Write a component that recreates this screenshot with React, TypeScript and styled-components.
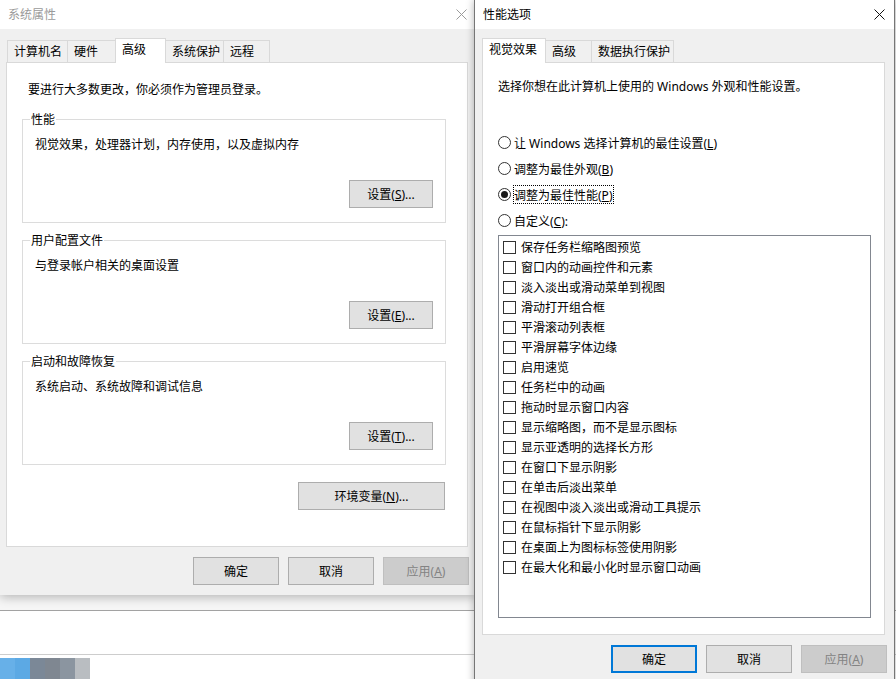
import styled, { createGlobalStyle } from 'styled-components'

type TabItem = { label: string; width: number; selected?: boolean }
type GroupItem = { title: string; text: string; label: string; key: string }

const leftTabs: TabItem[] = [
  { label: '计算机名', width: 61 },
  { label: '硬件', width: 49 },
  { label: '高级', width: 51, selected: true },
  { label: '系统保护', width: 59 },
  { label: '远程', width: 47 },
]

const rightTabs: TabItem[] = [
  { label: '视觉效果', width: 64, selected: true },
  { label: '高级', width: 47 },
  { label: '数据执行保护', width: 83 },
]

const groups: GroupItem[] = [
  { title: '性能', text: '视觉效果，处理器计划，内存使用，以及虚拟内存', label: '设置', key: 'S' },
  { title: '用户配置文件', text: '与登录帐户相关的桌面设置', label: '设置', key: 'E' },
  { title: '启动和故障恢复', text: '系统启动、系统故障和调试信息', label: '设置', key: 'T' },
]

const radios = [
  { before: '让 Windows 选择计算机的最佳设置(', key: 'L', after: ')' },
  { before: '调整为最佳外观(', key: 'B', after: ')' },
  { before: '调整为最佳性能(', key: 'P', after: ')', checked: true },
  { before: '自定义(', key: 'C', after: '):' },
]

const effects = [
  '保存任务栏缩略图预览',
  '窗口内的动画控件和元素',
  '淡入淡出或滑动菜单到视图',
  '滑动打开组合框',
  '平滑滚动列表框',
  '平滑屏幕字体边缘',
  '启用速览',
  '任务栏中的动画',
  '拖动时显示窗口内容',
  '显示缩略图，而不是显示图标',
  '显示亚透明的选择长方形',
  '在窗口下显示阴影',
  '在单击后淡出菜单',
  '在视图中淡入淡出或滑动工具提示',
  '在鼠标指针下显示阴影',
  '在桌面上为图标标签使用阴影',
  '在最大化和最小化时显示窗口动画',
]

const tiles = ['#67b0e8', '#5ca9e4', '#7b8897', '#7f8791', '#8b95a0', '#b9bdc1']

function CloseGlyph({ color }: { color: string }) {
  return (
    <svg width="11" height="11" viewBox="0 0 11 11">
      <path d="M0.5 0.5 L10.5 10.5 M10.5 0.5 L0.5 10.5" stroke={color} strokeWidth="1" fill="none" />
    </svg>
  )
}

function Tabs({ items, offset }: { items: TabItem[]; offset: number }) {
  return (
    <TabRow $offset={offset}>
      {items.map((t) => (
        <Tab key={t.label} $w={t.width} $selected={!!t.selected}>
          {t.label}
        </Tab>
      ))}
    </TabRow>
  )
}

export default function App() {
  return (
    <>
      <GlobalStyle />
      <Desktop>
        <Backdrop>
          <BackTop />
          <BackBand />
          <TaskStrip>
            {tiles.map((c, i) => (
              <Tile key={i} $c={c} />
            ))}
          </TaskStrip>
        </Backdrop>

        <LeftWindow>
          <TitleBar>
            <Title $dim>系统属性</Title>
            <CloseGlyph color="#9a9a9a" />
          </TitleBar>
          <WindowBody $pad="9px 8px 10px 6px">
            <Tabs items={leftTabs} offset={1} />
            <Panel $h={485} $pad="18px 21px 0 15px">
              <Intro $indent={6}>要进行大多数更改，你必须作为管理员登录。</Intro>
              {groups.map((g) => (
                <GroupBox key={g.title}>
                  <GroupTitle>{g.title}</GroupTitle>
                  <GroupText>{g.text}</GroupText>
                  <GroupActions>
                    <Button $w={84}>
                      {g.label}(<u>{g.key}</u>)...
                    </Button>
                  </GroupActions>
                </GroupBox>
              ))}
              <EnvRow>
                <Button $w={147}>
                  环境变量(<u>N</u>)...
                </Button>
              </EnvRow>
            </Panel>
            <Footer $shift={-1}>
              <Button $w={86}>确定</Button>
              <Button $w={86}>取消</Button>
              <Button $w={86} $variant="disabled">
                应用(<u>A</u>)
              </Button>
            </Footer>
          </WindowBody>
        </LeftWindow>

        <RightWindow>
          <TitleBar>
            <Title>性能选项</Title>
            <CloseGlyph color="#111111" />
          </TitleBar>
          <WindowBody $pad="9px 9px 10px 7px">
            <Tabs items={rightTabs} offset={0} />
            <Panel $h={573} $pad="15px 13px 0 15px">
              <Intro $indent={0}>选择你想在此计算机上使用的 Windows 外观和性能设置。</Intro>
              <RadioGroup>
                {radios.map((r) => (
                  <RadioRow key={r.key}>
                    <Radio $checked={!!r.checked} />
                    <RadioLabel $focused={!!r.checked}>
                      {r.before}
                      <u>{r.key}</u>
                      {r.after}
                    </RadioLabel>
                  </RadioRow>
                ))}
              </RadioGroup>
              <EffectList>
                {effects.map((e) => (
                  <CheckRow key={e}>
                    <CheckBox />
                    <span>{e}</span>
                  </CheckRow>
                ))}
              </EffectList>
            </Panel>
            <Footer $shift={-2}>
              <Button $w={86} $variant="focused">
                确定
              </Button>
              <Button $w={86}>取消</Button>
              <Button $w={86} $variant="disabled">
                应用(<u>A</u>)
              </Button>
            </Footer>
          </WindowBody>
        </RightWindow>
      </Desktop>
    </>
  )
}

// ========== Styled Components ==========

const GlobalStyle = createGlobalStyle`
  html, body {
    margin: 0;
    padding: 0;
  }
  body {
    font-family: 'Noto Sans', 'Noto Sans CJK SC', sans-serif;
    font-size: 12px;
    color: #000000;
    background: #ffffff;
  }
  u {
    text-underline-offset: 1px;
  }
`

const Desktop = styled.div`
  position: relative;
  width: 896px;
  height: 679px;
  overflow: hidden;
  background: #ffffff;
`

const Backdrop = styled.div`
  display: flex;
  flex-direction: column;
  height: 100%;
`

const BackTop = styled.div`
  height: 611px;
  flex-shrink: 0;
  background: #f6f6f6;
  border-bottom: 1px solid #a2a2a2;
  box-sizing: border-box;
`

const BackBand = styled.div`
  height: 44px;
  flex-shrink: 0;
  background: #ffffff;
  border-bottom: 1px solid #cdcdcd;
  box-sizing: border-box;
  margin-bottom: 3px;
`

const TaskStrip = styled.div`
  display: flex;
  flex: 1;
`

const Tile = styled.div<{ $c: string }>`
  width: 15px;
  background: ${({ $c }) => $c};
`

const LeftWindow = styled.div`
  position: absolute;
  left: 0;
  top: 0;
  width: 476px;
  height: 595px;
  background: #f0f0f0;
  box-shadow: 0 2px 10px rgba(0, 0, 0, 0.28);
  display: flex;
  flex-direction: column;
`

const RightWindow = styled.div`
  position: absolute;
  left: 474px;
  top: 0;
  width: 421px;
  height: 700px;
  box-sizing: border-box;
  background: #f0f0f0;
  border-left: 1px solid #767676;
  border-right: 1px solid #767676;
  box-shadow: 0 0 8px rgba(0, 0, 0, 0.3);
  display: flex;
  flex-direction: column;
`

const TitleBar = styled.div`
  height: 29px;
  flex-shrink: 0;
  background: #ffffff;
  display: flex;
  align-items: center;
  justify-content: space-between;
  padding: 0 9px 0 8px;
`

const Title = styled.div<{ $dim?: boolean }>`
  line-height: 16px;
  padding-top: 1px;
  color: ${({ $dim }) => ($dim ? '#9a9a9a' : '#000000')};
`

const WindowBody = styled.div<{ $pad: string }>`
  display: flex;
  flex-direction: column;
  padding: ${({ $pad }) => $pad};
`

const TabRow = styled.div<{ $offset: number }>`
  display: flex;
  align-items: flex-end;
  height: 24px;
  padding-left: ${({ $offset }) => $offset}px;
`

const Tab = styled.div<{ $w: number; $selected: boolean }>`
  box-sizing: border-box;
  width: ${({ $w }) => $w}px;
  height: ${({ $selected }) => ($selected ? 25 : 22)}px;
  margin-right: -1px;
  margin-bottom: ${({ $selected }) => ($selected ? -1 : 0)}px;
  padding: 1px 0 0 6px;
  border: 1px solid #d9d9d9;
  border-bottom: none;
  background: ${({ $selected }) => ($selected ? '#ffffff' : '#f0f0f0')};
  position: relative;
  z-index: ${({ $selected }) => ($selected ? 2 : 0)};
  line-height: 20px;
  white-space: nowrap;
`

const Panel = styled.div<{ $h: number; $pad: string }>`
  box-sizing: border-box;
  height: ${({ $h }) => $h}px;
  border: 1px solid #d9d9d9;
  background: #ffffff;
  padding: ${({ $pad }) => $pad};
  display: flex;
  flex-direction: column;
`

const Intro = styled.div<{ $indent: number }>`
  box-sizing: border-box;
  height: 16px;
  flex-shrink: 0;
  line-height: 16px;
  margin-left: ${({ $indent }) => $indent}px;
  margin-bottom: 5px;
  padding-top: 1px;
  white-space: nowrap;
`

const GroupBox = styled.div`
  position: relative;
  border: 1px solid #dcdcdc;
  margin-top: 17px;
  padding: 17px 12px 14px 12px;
`

const GroupTitle = styled.span`
  position: absolute;
  top: -7px;
  left: 7px;
  padding: 0 1px;
  background: #ffffff;
  line-height: 14px;
  white-space: nowrap;
`

const GroupText = styled.div`
  line-height: 16px;
  white-space: nowrap;
`

const GroupActions = styled.div`
  display: flex;
  justify-content: flex-end;
  margin-top: 27px;
`

const EnvRow = styled.div`
  display: flex;
  justify-content: flex-end;
  margin-top: 17px;
  padding-right: 1px;
`

const Footer = styled.div<{ $shift: number }>`
  display: flex;
  justify-content: flex-end;
  gap: 9px;
  margin-top: 10px;
  margin-right: ${({ $shift }) => $shift}px;
`

const Button = styled.div<{ $w: number; $variant?: 'focused' | 'disabled' }>`
  box-sizing: border-box;
  width: ${({ $w }) => $w}px;
  height: 28px;
  display: flex;
  align-items: center;
  justify-content: center;
  padding-top: 1px;
  background: ${({ $variant }) => ($variant === 'disabled' ? '#cccccc' : '#e1e1e1')};
  border: ${({ $variant }) =>
    $variant === 'focused'
      ? '2px solid #0078d7'
      : $variant === 'disabled'
        ? '1px solid #bfbfbf'
        : '1px solid #adadad'};
  color: ${({ $variant }) => ($variant === 'disabled' ? '#838383' : '#000000')};
  line-height: 16px;
  white-space: nowrap;
  user-select: none;
`

const RadioGroup = styled.div`
  display: flex;
  flex-direction: column;
  gap: 6px;
  margin-top: 33px;
`

const RadioRow = styled.div`
  display: flex;
  align-items: center;
  height: 20px;
`

const Radio = styled.span<{ $checked: boolean }>`
  box-sizing: border-box;
  width: 13px;
  height: 13px;
  border: 1px solid #333333;
  border-radius: 50%;
  background: #ffffff;
  position: relative;
  flex-shrink: 0;

  &::after {
    content: '';
    display: ${({ $checked }) => ($checked ? 'block' : 'none')};
    position: absolute;
    left: 2px;
    top: 2px;
    width: 7px;
    height: 7px;
    border-radius: 50%;
    background: #1a1a1a;
  }
`

const RadioLabel = styled.span<{ $focused: boolean }>`
  margin-left: 2px;
  padding: 2px 2px 0 1px;
  line-height: 17px;
  white-space: nowrap;
  outline: ${({ $focused }) => ($focused ? '1px dotted #000000' : 'none')};
  outline-offset: -1px;
`

const EffectList = styled.div`
  box-sizing: border-box;
  height: 383px;
  margin-top: 5px;
  border: 1px solid #828790;
  padding: 1px 0 0 4px;
  display: flex;
  flex-direction: column;
`

const CheckRow = styled.div`
  display: flex;
  align-items: center;
  gap: 5px;
  height: 20px;
  line-height: 16px;
  white-space: nowrap;

  span:last-child {
    padding-top: 2px;
  }
`

const CheckBox = styled.span`
  box-sizing: border-box;
  width: 13px;
  height: 13px;
  border: 1px solid #333333;
  background: #ffffff;
  flex-shrink: 0;
`
